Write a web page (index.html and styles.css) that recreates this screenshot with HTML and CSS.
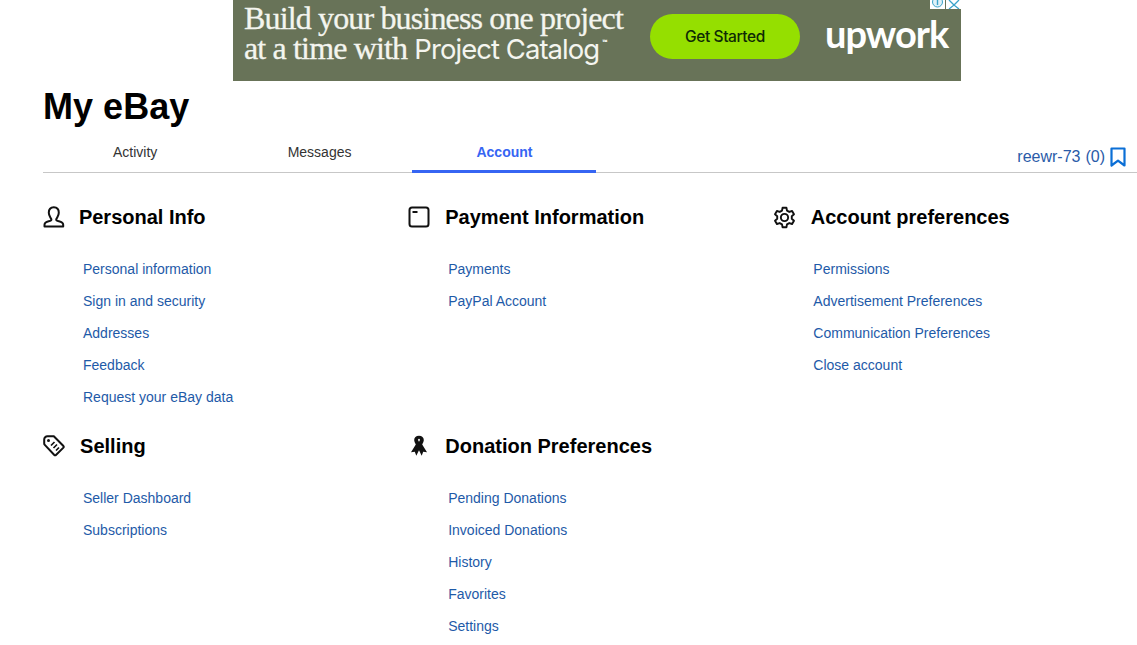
FILE: index.html
```html
<!DOCTYPE html>
<html lang="en">
<head>
<meta charset="utf-8">
<title>My eBay</title>
<link rel="stylesheet" href="styles.css">
</head>
<body>
<div class="ad-row">
  <div class="ad">
    <div class="ad-copy">
      <div class="ad-line">Build your business one project</div>
      <div class="ad-line">at a time with <span class="ad-sans">Project Catalog</span><sup class="ad-tm">™</sup></div>
    </div>
    <div class="ad-btn">Get Started</div>
    <div class="ad-logo">upwork</div>
    <div class="ad-choices">
      <svg class="ad-choice" viewBox="0 0 15 9" width="15" height="9"><circle cx="7.500" cy="2" r="5" fill="#dff1f7" stroke="#3aa3c9"/><path d="M7.500 0v5" stroke="#3aa3c9" stroke-width="1.400"/></svg>
      <svg class="ad-choice" viewBox="0 0 15 9" width="15" height="9"><path d="M3 0l5 5 5-5M3 9l5-4 5 4" fill="none" stroke="#3aa3c9" stroke-width="1.300"/></svg>
    </div>
  </div>
</div>
<main class="page">
  <h1 class="title">My eBay</h1>
  <div class="tabbar">
    <a class="tab">Activity</a>
    <a class="tab">Messages</a>
    <a class="tab tab-active">Account</a>
    <div class="user">
      <span class="user-name">reewr-73</span>
      <span class="user-count">(0)</span>
      <svg class="user-mark" viewBox="0 0 16 20" width="16" height="20"><path d="M1.500 1.500h13v17L8 13.600 1.500 18.500z" fill="none" stroke="#0b6fd6" stroke-width="2.200" stroke-linejoin="round"/></svg>
    </div>
  </div>
  <div class="sections">
    <section class="section">
      <h2 class="section-head">
        <svg class="icon" viewBox="0 0 22 22" width="22" height="22"><path d="M1.500 20.500v-1.700c0-2 1.700-2.900 4.200-3.500 2-.5 2.700-1 2.700-1.900 0-.7-.5-1.200-1.100-2C6.500 10 5.800 8.800 5.800 6.800c0-3.400 2.100-5.500 5-5.500s5 2.100 5 5.500c0 2-.7 3.200-1.500 4.600-.6.800-1.100 1.300-1.100 2 0 .9.700 1.400 2.700 1.900 2.500.6 4.300 1.500 4.300 3.500v1.700z" fill="none" stroke="#111" stroke-width="2" stroke-linejoin="round"/></svg>
        <span class="head-text head-text-tight">Personal Info</span>
      </h2>
      <ul class="links">
        <li><a>Personal information</a></li>
        <li><a>Sign in and security</a></li>
        <li><a>Addresses</a></li>
        <li><a>Feedback</a></li>
        <li><a>Request your eBay data</a></li>
      </ul>
    </section>
    <section class="section">
      <h2 class="section-head">
        <svg class="icon" viewBox="0 0 22 22" width="22" height="22"><rect x="1.500" y="1.500" width="19" height="19" rx="2.500" fill="none" stroke="#111" stroke-width="2"/><path d="M4.500 6h5" stroke="#111" stroke-width="2"/></svg>
        <span class="head-text">Payment Information</span>
      </h2>
      <ul class="links">
        <li><a>Payments</a></li>
        <li><a>PayPal Account</a></li>
      </ul>
    </section>
    <section class="section">
      <h2 class="section-head">
        <svg class="icon" viewBox="0 0 24 24" width="23" height="23"><path d="M10 1.800h4l.6 3 2.400 1.400 2.900-1 2 3.500-2.300 2v2.600l2.300 2-2 3.500-2.900-1-2.400 1.400-.6 3h-4l-.6-3-2.400-1.400-2.900 1-2-3.500 2.300-2v-2.600l-2.300-2 2-3.500 2.900 1L9.400 4.800z" fill="none" stroke="#111" stroke-width="2" stroke-linejoin="round"/><circle cx="12" cy="12" r="3.800" fill="none" stroke="#111" stroke-width="2"/></svg>
        <span class="head-text head-text-gear">Account preferences</span>
      </h2>
      <ul class="links">
        <li><a>Permissions</a></li>
        <li><a>Advertisement Preferences</a></li>
        <li><a>Communication Preferences</a></li>
        <li><a>Close account</a></li>
      </ul>
    </section>
    <section class="section">
      <h2 class="section-head">
        <svg class="icon" viewBox="0 0 22 22" width="22" height="22"><path d="M1.200 4.500v4a2 2 0 0 0 .6 1.400l9.300 9.800a1.500 1.500 0 0 0 2.100 0l7-6.800a1.500 1.500 0 0 0 0-2.100L10.800 1.300H4.400a3.200 3.200 0 0 0-3.200 3.200z" fill="none" stroke="#111" stroke-width="2" stroke-linejoin="round"/><circle cx="5.500" cy="5.500" r="1.500" fill="#111"/><path d="M8 10.500l3.500-3.500M10.500 13l3.500-3.500M13 15.500l3-3" stroke="#111" stroke-width="1.700"/></svg>
        <span class="head-text">Selling</span>
      </h2>
      <ul class="links">
        <li><a>Seller Dashboard</a></li>
        <li><a>Subscriptions</a></li>
      </ul>
    </section>
    <section class="section">
      <h2 class="section-head">
        <svg class="icon" viewBox="0 0 22 22" width="22" height="22"><path d="M11 .8C8 .8 6.200 2.700 6.200 5.100c0 1.500.8 3 1.600 4.400L3 17.200l3.800-.5 1.500 4.100L11 15.300l2.700 5.500 1.500-4.100 3.800.5-4.800-7.700c.8-1.400 1.600-2.900 1.600-4.400C15.800 2.700 14 .8 11 .8zm0 3c.6 0 .9.400.9.900 0 .6-.4 1.300-.9 2.100-.5-.8-.9-1.500-.9-2.100 0-.5.300-.9.900-.9z" fill="#111" fill-rule="evenodd"/></svg>
        <span class="head-text">Donation Preferences</span>
      </h2>
      <ul class="links">
        <li><a>Pending Donations</a></li>
        <li><a>Invoiced Donations</a></li>
        <li><a>History</a></li>
        <li><a>Favorites</a></li>
        <li><a>Settings</a></li>
      </ul>
    </section>
  </div>
</main>
</body>
</html>
```
FILE: styles.css
```css
html, body {
  margin: 0;
  padding: 0;
  height: 645px;
  overflow: hidden;
  background: #fff;
  font-family: "Liberation Sans", Arial, sans-serif;
  color: #111;
}
.ad-row {
  display: flex;
  padding-left: 233px;
}
.ad {
  position: relative;
  width: 728px;
  height: 81px;
  background: #687358;
  display: flex;
  align-items: center;
  box-sizing: border-box;
  padding-left: 11px;
  color: #f4f5ef;
}
.ad-copy {
  width: 406px;
  font-family: "Liberation Serif", serif;
  font-size: 32px;
  line-height: 30px;
  letter-spacing: -0.850px;
  margin-top: -15px;
  -webkit-text-stroke: 0.3px #f4f5ef;
}
.ad-line {
  white-space: nowrap;
  height: 30px;
}
.ad-sans {
  font-family: "Inter", "Liberation Sans", sans-serif;
  font-size: 27.500px;
  line-height: 1;
  letter-spacing: -0.950px;
  -webkit-text-stroke: 0;
}
.ad-tm {
  font-size: 5px;
  letter-spacing: 0;
  vertical-align: 16px;
  line-height: 0;
  margin-left: 3px;
}
.ad-btn {
  width: 150px;
  height: 45px;
  border-radius: 23px;
  background: #95df00;
  color: #0e2a05;
  font-family: "Inter", "Liberation Sans", sans-serif;
  font-size: 15.500px;
  font-weight: 500;
  letter-spacing: -0.4px;
  display: flex;
  align-items: center;
  justify-content: center;
  margin-top: -9px;
}
.ad-logo {
  margin-left: 25px;
  margin-top: -16px;
  font-family: "Lato", "Liberation Sans", sans-serif;
  font-size: 38px;
  font-weight: 700;
  letter-spacing: -1px;
  color: #fff;
}
.ad-choices {
  position: absolute;
  top: 0;
  right: 0;
  display: flex;
  gap: 1px;
}
.ad-choice {
  display: block;
  background: #fff;
}
.page {
  padding: 0 0 0 42.600px;
}
.title {
  margin: 0 0 0 0.500px;
  padding-top: 6px;
  font-size: 36px;
  line-height: 40px;
  font-weight: 700;
  color: #000;
}
.tabbar {
  display: flex;
  align-items: stretch;
  height: 45px;
  margin-left: 0.400px;
  border-bottom: 1px solid #c7c7c7;
}
.tab {
  width: 184.400px;
  text-align: center;
  font-size: 14px;
  line-height: 20px;
  padding-top: 15px;
  box-sizing: border-box;
  color: #333;
}
.tab-active {
  color: #3665f3;
  font-weight: 700;
  padding-left: 1px;
  border-bottom: 3px solid #3665f3;
  height: 46px;
}
.user {
  margin-left: auto;
  padding-right: 11px;
  display: flex;
  align-items: center;
  gap: 5px;
  font-size: 16px;
  color: #2a5ba8;
  height: 34px;
  margin-top: 13px;
}
.sections {
  display: grid;
  grid-template-columns: repeat(3, 365.200px);
  padding-top: 32px;
}
.section-head {
  display: flex;
  align-items: center;
  margin: 0;
  height: 24px;
  font-size: 20px;
  font-weight: 700;
  color: #000;
}
.icon {
  flex: none;
  display: block;
}
.head-text {
  margin-left: 15.500px;
}
.head-text-tight {
  margin-left: 14.300px;
}
.head-text-gear {
  margin-left: 14.800px;
}
.links {
  list-style: none;
  margin: 24px 0 0;
  padding: 0 0 0 40.400px;
  min-height: 160px;
}
.links li {
  height: 32px;
  font-size: 14px;
  line-height: 32px;
  color: #1e5aa8;
}
.section:nth-child(n+4) {
  margin-top: 21px;
}
```
